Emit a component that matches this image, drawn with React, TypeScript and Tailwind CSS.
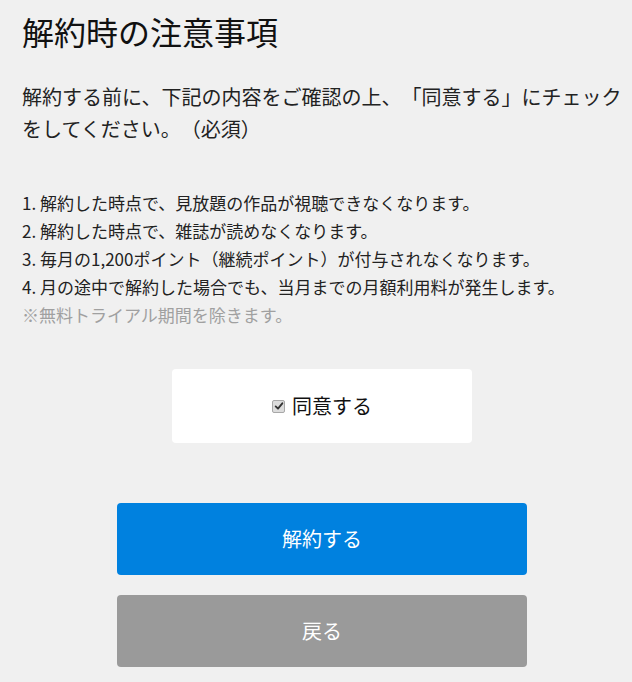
import React, { useState } from 'react';

const ITEMS = [
  '1. 解約した時点で、見放題の作品が視聴できなくなります。',
  '2. 解約した時点で、雑誌が読めなくなります。',
  '3. 毎月の1,200ポイント（継続ポイント）が付与されなくなります。',
  '4. 月の途中で解約した場合でも、当月までの月額利用料が発生します。',
];

const App = () => {
  const [agreed, setAgreed] = useState(true);

  return (
    <div
      className="min-h-[682px] bg-[#f0f0f0] pl-[22px] pr-[10px] pt-[11px] text-[#222] [text-spacing-trim:space-all]"
      style={{ fontFamily: '"Noto Sans CJK JP", "Noto Sans", sans-serif' }}
    >
      <h1 className="text-[32px] leading-[40px] font-normal text-[#111]">解約時の注意事項</h1>

      <p className="mt-[30px] text-[20px] leading-[32px]">
        解約する前に、下記の内容をご確認の上、「同意する」にチェックをしてください。（必須）
      </p>

      <ul className="mt-[44px] text-[17px] leading-[28px]">
        {ITEMS.map((item) => (
          <li key={item}>{item}</li>
        ))}
        <li className="text-[#a0a0a0]">※無料トライアル期間を除きます。</li>
      </ul>

      <div className="mt-[40px] flex justify-center">
        <label className="flex h-[74px] w-[300px] cursor-pointer items-center justify-center gap-[7px] rounded-[4px] bg-white">
          <input
            type="checkbox"
            checked={agreed}
            onChange={(e) => setAgreed(e.target.checked)}
            className="sr-only"
          />
          <span className="flex h-[13px] w-[13px] items-center justify-center rounded-[2px] border border-[#a8a8a8] bg-[#dcdcdc]">
            {agreed && (
              <svg viewBox="0 0 12 12" className="h-[10px] w-[10px]">
                <path d="M2 6.5 L4.8 9.2 L10 2.8" fill="none" stroke="#333" strokeWidth="2.2" strokeLinecap="round" strokeLinejoin="round" />
              </svg>
            )}
          </span>
          <span className="text-[20px] leading-[28px] text-[#111]">同意する</span>
        </label>
      </div>

      <div className="mt-[60px] flex flex-col items-center gap-[20px]">
        <button className="h-[72px] w-[410px] rounded-[4px] bg-[#0081df] text-[20px] text-white">解約する</button>
        <button className="h-[72px] w-[410px] rounded-[4px] bg-[#9a9a9a] text-[20px] text-white">戻る</button>
      </div>
    </div>
  );
};

export default App;
